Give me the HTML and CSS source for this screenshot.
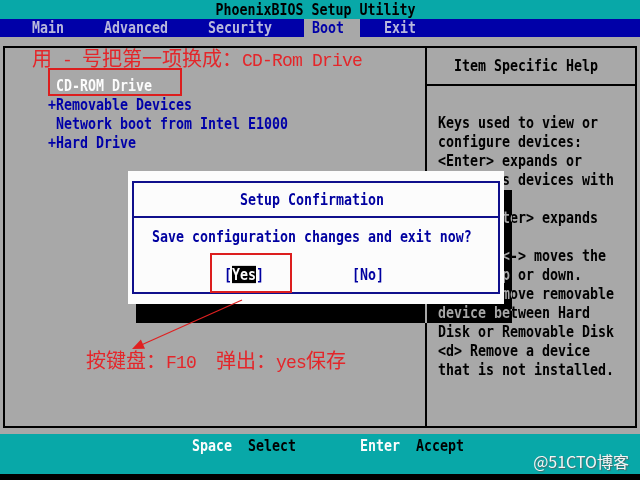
FILE: index.html
```html
<!DOCTYPE html>
<html lang="zh-CN">
<head>
    <meta charset="UTF-8">
    <meta name="viewport" content="width=device-width, initial-scale=1.0">
    <title>PhoenixBIOS Setup Utility</title>
    <link rel="stylesheet" href="styles.css">
</head>
<body>
    <div class="screen">
        <header class="title"><span class="t">PhoenixBIOS Setup Utility</span></header>

        <nav class="menu">
            <span class="tab"><span class="t">Main</span></span>
            <span class="tab"><span class="t">Advanced</span></span>
            <span class="tab"><span class="t">Security</span></span>
            <span class="tab active"><span class="t">Boot</span></span>
            <span class="tab"><span class="t">Exit</span></span>
        </nav>

        <main class="desk">
            <div class="frame">
                <section class="items">
                    <p class="note"><span class="zh">用</span><span class="en"> - </span><span class="zh">号把第一项换成：</span><span class="en">CD-Rom Drive</span></p>
                    <ul class="boot-list">
                        <li class="line selected"> CD-ROM Drive</li>
                        <li class="line">+Removable Devices</li>
                        <li class="line"> Network boot from Intel E1000</li>
                        <li class="line">+Hard Drive</li>
                    </ul>
                    <p class="note note-bottom"><span class="zh">按键盘：</span><span class="en">F10  </span><span class="zh">弹出：</span><span class="en">yes</span><span class="zh">保存</span></p>
                </section>

                <aside class="help">
                    <div class="help-head"><span class="t">Item Specific Help</span></div>
                    <div class="help-text">
                        <div class="line">Keys used to view or</div>
                        <div class="line">configure devices:</div>
                        <div class="line">&lt;Enter&gt; expands or</div>
                        <div class="line">collapses devices with</div>
                        <div class="line">a + or -</div>
                        <div class="line">&lt;Ctrl+Enter&gt; expands</div>
                        <div class="line">all</div>
                        <div class="line">&lt;+&gt; and &lt;-&gt; moves the</div>
                        <div class="line">device up or down.</div>
                        <div class="line">&lt;n&gt; May move removable</div>
                        <div class="line">device between Hard</div>
                        <div class="line">Disk or Removable Disk</div>
                        <div class="line">&lt;d&gt; Remove a device</div>
                        <div class="line">that is not installed.</div>
                    </div>
                </aside>
            </div>
        </main>

        <footer class="keys">
            <span class="key t">Space</span>
            <span class="act t">Select</span>
            <span class="key key-far t">Enter</span>
            <span class="act t">Accept</span>
            <span class="mark">@51CTO博客</span>
        </footer>
        <div class="bottom"></div>

        <!-- dialog, its shadow and the red notes lie over the screen -->
        <div class="dlg-shadow"></div>
        <div class="dialog">
            <div class="dlg-box">
                <div class="dlg-title"><span class="t">Setup Confirmation</span></div>
                <div class="dlg-msg line">Save configuration changes and exit now?</div>
                <div class="dlg-btns">
                    <span class="btn t">[<b>Yes</b>]</span>
                    <span class="btn t">[No]</span>
                </div>
            </div>
        </div>

        <div class="mark-box box-drive"></div>
        <div class="mark-box box-yes"></div>
        <svg class="arrow" width="640" height="480" viewBox="0 0 640 480">
            <line x1="242" y1="300" x2="139" y2="346" stroke="#e02020" stroke-width="1.2"/>
            <polygon points="132,349 145,348.7 140.9,339.5" fill="#e02020"/>
        </svg>
    </div>
</body>
</html>
```

FILE: styles.css
```css
body {
    margin: 0;
    background-color: #000;
}
.screen {
    position: relative;
    width: 640px;
    height: 480px;
    overflow: hidden;
    display: flex;
    flex-direction: column;
    background-color: #a8a8a8;
    font-family: "DejaVu Sans Mono", monospace;
    font-size: 13.29px;
    font-weight: bold;
    color: #000;
}
/* VGA glyphs are taller than the font's */
.t {
    display: inline-block;
    white-space: pre;
    transform: scaleY(1.15);
}
.line {
    height: 19px;
    line-height: 19px;
    white-space: pre;
    transform: scaleY(1.15);
}
.title {
    height: 19px;
    line-height: 19px;
    padding-right: 9px;
    text-align: center;
    background-color: #08a8a8;
    color: #000;
}
.menu {
    height: 18px;
    line-height: 18px;
    display: flex;
    gap: 40px;
    padding-left: 32px;
    background-color: #0000a8;
    color: #b8b8dc;
}
.tab.active {
    padding: 0 16px 0 8px;
    margin: 0 -16px 0 -8px;
    background-color: #a8a8a8;
    color: #0000a8;
}
.desk {
    height: 397px;
    padding: 9px 3px 0;
    box-sizing: border-box;
}
.frame {
    display: flex;
    height: 382px;
    border: 2px solid #000;
    box-sizing: border-box;
}
.items {
    flex: 0 0 422px;
    padding-left: 27px;
    border-right: 2px solid #000;
    box-sizing: border-box;
}
.note {
    margin: 0;
    height: 20px;
    line-height: 20px;
    white-space: pre;
    color: #e4262a;
    font-weight: normal;
}
.note .zh {
    font-family: "Noto Sans CJK SC", sans-serif;
    font-size: 20px;
}
.note .en {
    font-family: "Liberation Mono", monospace;
    font-size: 18px;
    letter-spacing: -0.8px;
}
.note-bottom {
    margin: 198px 0 0 54px;
}
.boot-list {
    list-style: none;
    margin: 8px 0 0;
    padding: 0 0 0 16px;
    color: #0000a8;
}
.boot-list .selected {
    color: #fcfcfc;
}
.help {
    flex: 1;
}
.help-head {
    height: 36px;
    line-height: 36px;
    padding-right: 10px;
    text-align: center;
    border-bottom: 2px solid #000;
}
.help-text {
    padding: 27px 0 0 11px;
}
.keys {
    position: relative;
    height: 40px;
    display: flex;
    padding: 4px 0 0 192px;
    box-sizing: border-box;
    line-height: 19px;
    background-color: #08a8a8;
}
.key {
    color: #fcfcfc;
    margin-right: 16px;
}
.key-far {
    margin-left: 64px;
}
.act {
    color: #000;
}
.mark {
    position: absolute;
    right: 11px;
    bottom: 3px;
    font-family: "Noto Sans CJK SC", sans-serif;
    font-size: 16px;
    font-weight: normal;
    color: #f4f4f4;
    text-shadow: 1px 1px 1px #4a6a6a;
}
.bottom {
    height: 6px;
    background-color: #000;
}
.dlg-shadow {
    position: absolute;
    left: 136px;
    top: 190px;
    width: 376px;
    height: 133px;
    background-color: #a8a8a8;
    mix-blend-mode: difference;
}
.dialog {
    position: absolute;
    left: 128px;
    top: 171px;
    width: 376px;
    height: 133px;
    padding: 10px 4px;
    box-sizing: border-box;
    background-color: #fcfcfc;
    color: #0000a0;
}
.dlg-box {
    height: 113px;
    border: 2px solid #10108c;
    box-sizing: border-box;
}
.dlg-title {
    height: 35px;
    line-height: 33px;
    padding-left: 106px;
    border-bottom: 2px solid #10108c;
    box-sizing: border-box;
}
.dlg-msg {
    margin-top: 9px;
    padding-left: 18px;
}
.dlg-btns {
    display: flex;
    gap: 88px;
    margin-top: 19px;
    padding-left: 90px;
    line-height: 19px;
}
.btn b {
    background-color: #000;
    color: #fcfcfc;
}
.mark-box {
    position: absolute;
    border: 2px solid #dc1e1e;
}
.box-drive {
    left: 48px;
    top: 68px;
    width: 130px;
    height: 24px;
}
.box-yes {
    left: 210px;
    top: 253px;
    width: 78px;
    height: 36px;
}
.arrow {
    position: absolute;
    left: 0;
    top: 0;
    pointer-events: none;
}
```
